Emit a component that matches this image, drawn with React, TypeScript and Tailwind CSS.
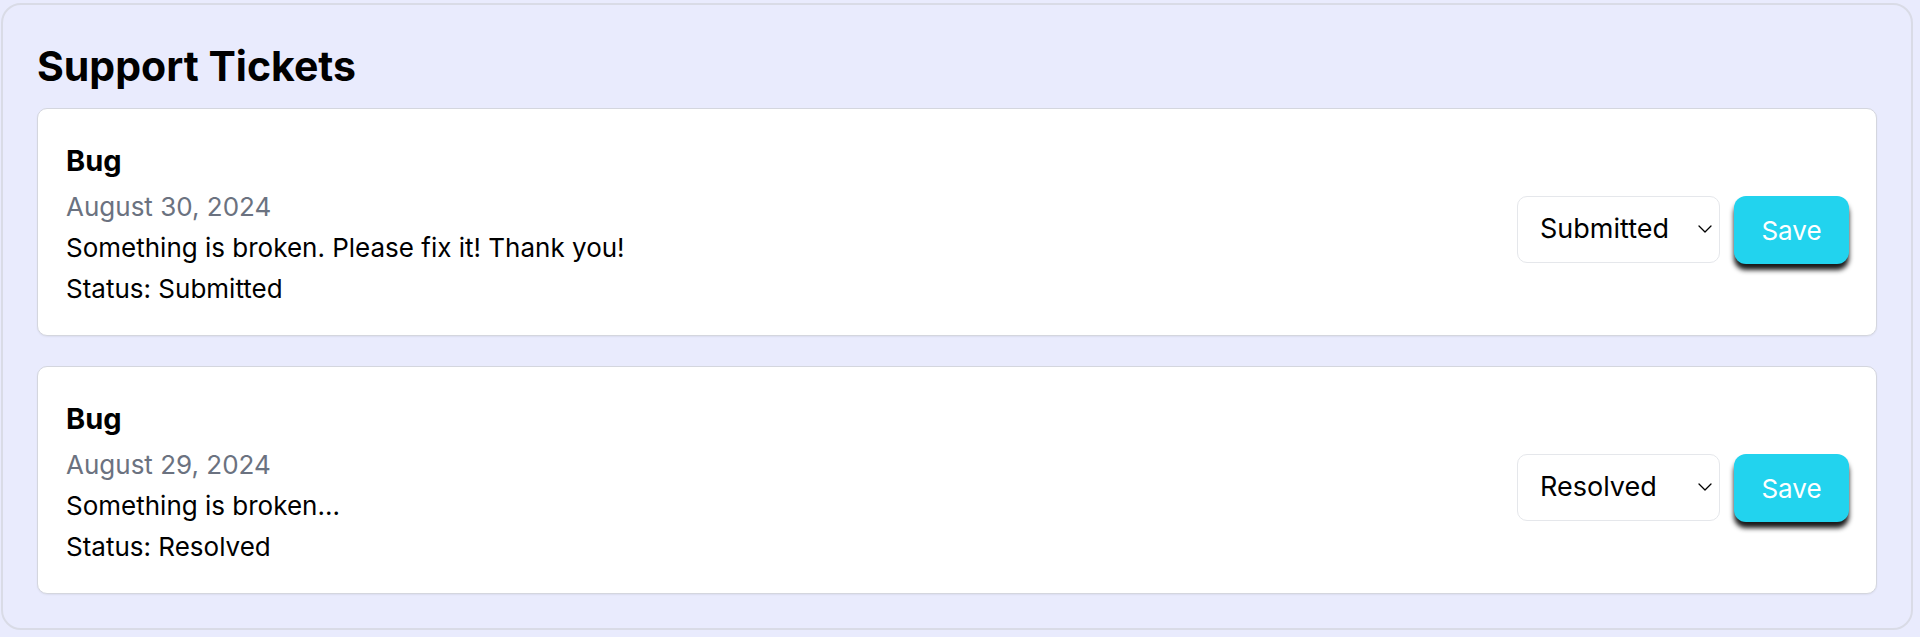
import { ChevronDown } from "lucide-react";

type Ticket = {
  id: number;
  type: string;
  date: string;
  body: string;
  status: string;
};

const tickets: Ticket[] = [
  { id: 1, type: "Bug", date: "August 30, 2024", body: "Something is broken. Please fix it! Thank you!", status: "Submitted" },
  { id: 2, type: "Bug", date: "August 29, 2024", body: "Something is broken...", status: "Resolved" },
];

const statuses = ["Submitted", "In Progress", "Resolved"];

function TicketCard({ ticket }: { ticket: Ticket }) {
  return (
    <article className="flex items-start justify-between rounded-[10px] border border-[#d4d6de] bg-white pt-[32px] pr-[27px] pb-[26px] pl-[28px] shadow-[0_1px_2px_rgba(0,0,0,0.06)]">
      <div>
        <h3 className="text-[29px] font-bold leading-[40px] text-black">{ticket.type}</h3>
        <p className="mt-[5px] text-[26px] leading-[41px] text-[#6b7280]">{ticket.date}</p>
        <p className="text-[26px] leading-[41px] text-black">{ticket.body}</p>
        <p className="text-[26px] leading-[41px] text-black">Status: {ticket.status}</p>
      </div>
      <div className="mt-[55px] flex items-start gap-[14px]">
        <div className="relative">
          <select
            defaultValue={ticket.status}
            className="h-[67px] w-[203px] appearance-none rounded-[10px] border border-[#e5e7eb] bg-white pl-[22px] text-[27px] text-black outline-none"
          >
            {statuses.map((s) => (
              <option key={s}>{s}</option>
            ))}
          </select>
          <ChevronDown
            className="pointer-events-none absolute right-[3px] top-[21px] h-[24px] w-[24px] text-black"
            strokeWidth={1.3}
            aria-hidden
          />
        </div>
        <button className="h-[68px] w-[115px] rounded-[12px] bg-[#22d3ee] text-[26px] text-white shadow-[0_6px_5px_rgba(0,0,0,0.9)]">
          Save
        </button>
      </div>
    </article>
  );
}

export default function App() {
  return (
    <div className="min-h-screen bg-[#e9ebfd] pt-[3px] pl-[1px] pr-[7px] font-['Inter',sans-serif]">
      <section className="rounded-[20px] border-2 border-[#d9dbe6] bg-[#e9ebfd] px-[34px] pt-[37px] pb-[34px]">
        <h2 className="mb-[18px] text-[41px] font-bold leading-[48px] text-black">Support Tickets</h2>
        <div className="flex flex-col gap-[30px]">
          {tickets.map((t) => (
            <TicketCard key={t.id} ticket={t} />
          ))}
        </div>
      </section>
    </div>
  );
}
